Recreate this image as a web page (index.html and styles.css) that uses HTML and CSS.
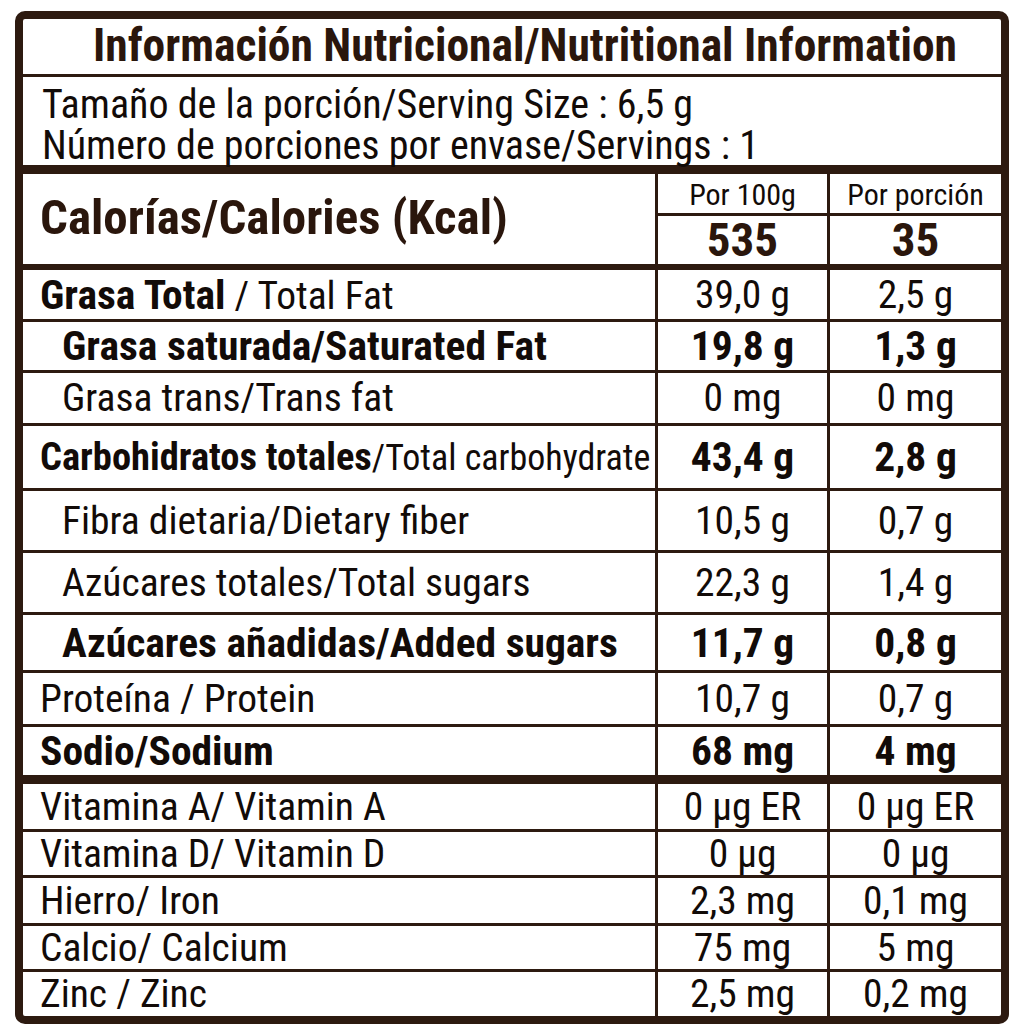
FILE: index.html
```html
<!DOCTYPE html>
<html lang="es">
<head>
<meta charset="utf-8">
<title>Información Nutricional</title>
<link rel="stylesheet" href="styles.css">
</head>
<body>
<div class="panel">
  <div class="title">Información Nutricional/Nutritional Information</div>
  <div class="serving">
    <div>Tamaño de la porción/Serving Size : 6,5 g</div>
    <div>Número de porciones por envase/Servings : 1</div>
  </div>
  <div class="calories">
    <div class="cal-label">Calorías/Calories (Kcal)</div>
    <div class="cal-col">
      <div class="cal-head">Por 100g</div>
      <div class="cal-val">535</div>
    </div>
    <div class="cal-col">
      <div class="cal-head">Por porción</div>
      <div class="cal-val">35</div>
    </div>
  </div>

  <div class="row r-fat"><div class="lbl"><span><b>Grasa Total</b> / Total Fat</span></div><div class="val">39,0 g</div><div class="val">2,5 g</div></div>
  <div class="row r-sat bold"><div class="lbl indent">Grasa saturada/Saturated Fat</div><div class="val">19,8 g</div><div class="val">1,3 g</div></div>
  <div class="row r-trans"><div class="lbl indent">Grasa trans/Trans fat</div><div class="val">0 mg</div><div class="val">0 mg</div></div>
  <div class="row r-carb"><div class="lbl"><span><b>Carbohidratos totales</b>/Total carbohydrate</span></div><div class="val bold">43,4 g</div><div class="val bold">2,8 g</div></div>
  <div class="row r-fib"><div class="lbl indent">Fibra dietaria/Dietary fiber</div><div class="val">10,5 g</div><div class="val">0,7 g</div></div>
  <div class="row r-sug"><div class="lbl indent">Azúcares totales/Total sugars</div><div class="val">22,3 g</div><div class="val">1,4 g</div></div>
  <div class="row r-add bold"><div class="lbl indent">Azúcares añadidas/Added sugars</div><div class="val">11,7 g</div><div class="val">0,8 g</div></div>
  <div class="row r-prot"><div class="lbl">Proteína / Protein</div><div class="val">10,7 g</div><div class="val">0,7 g</div></div>
  <div class="row r-sod bold thick"><div class="lbl">Sodio/Sodium</div><div class="val">68 mg</div><div class="val">4 mg</div></div>

  <div class="row mini"><div class="lbl">Vitamina A/ Vitamin A</div><div class="val">0 µg ER</div><div class="val">0 µg ER</div></div>
  <div class="row mini r-vd"><div class="lbl">Vitamina D/ Vitamin D</div><div class="val">0 µg</div><div class="val">0 µg</div></div>
  <div class="row mini"><div class="lbl">Hierro/ Iron</div><div class="val">2,3 mg</div><div class="val">0,1 mg</div></div>
  <div class="row mini r-vd"><div class="lbl">Calcio/ Calcium</div><div class="val">75 mg</div><div class="val">5 mg</div></div>
  <div class="row mini last"><div class="lbl">Zinc / Zinc</div><div class="val">2,5 mg</div><div class="val">0,2 mg</div></div>
</div>
</body>
</html>
```
FILE: styles.css
```css
html, body {
  margin: 0;
  padding: 0;
  background: #ffffff;
}

body {
  padding: 11px 0 0 15px;
  font-family: "Liberation Sans Narrow", "Roboto Condensed", "DejaVu Sans Condensed", "Liberation Sans", sans-serif;
  font-stretch: condensed;
  color: #120b08;
}

.panel {
  width: 994px;
  box-sizing: border-box;
  border: 8px solid #2d1a10;
  border-radius: 10px;
  background: #fff;
}

.title {
  height: 58px;
  box-sizing: border-box;
  border-bottom: 3px solid #2d1a10;
  display: flex;
  align-items: center;
  justify-content: center;
  padding: 0 0 2px 26px;
  font-size: 45.5px;
  font-weight: bold;
  color: #2a160c;
  line-height: 1;
}

.serving {
  border-bottom: 9px solid #2d1a10;
  box-sizing: border-box;
  height: 97px;
  padding: 7px 0 0 19px;
  font-size: 40px;
  line-height: 41px;
}

.calories {
  display: grid;
  grid-template-columns: 1fr 172px 174px;
  border-bottom: 6px solid #2d1a10;
}

.cal-label {
  font-size: 49px;
  font-weight: bold;
  color: #2a160c;
  padding: 0 0 4px 17px;
  display: flex;
  align-items: center;
  height: 90px;
  box-sizing: border-box;
  line-height: 1;
}

.cal-col {
  border-left: 3px solid #2d1a10;
  display: flex;
  flex-direction: column;
}

.cal-head {
  height: 42px;
  border-bottom: 3px solid #2d1a10;
  display: flex;
  align-items: center;
  justify-content: center;
  font-size: 30px;
  line-height: 1;
  padding-top: 2px;
  box-sizing: border-box;
}

.cal-val {
  height: 48px;
  display: flex;
  align-items: center;
  justify-content: center;
  font-size: 47px;
  font-weight: bold;
  color: #2a160c;
  line-height: 1;
  padding-bottom: 2px;
  box-sizing: border-box;
}

.row {
  display: grid;
  grid-template-columns: 1fr 172px 174px;
  border-bottom: 3px solid #2d1a10;
  box-sizing: border-box;
  font-size: 39.5px;
  line-height: 1;
}

.row.bold {
  font-weight: bold;
  font-size: 41.5px;
}

.row.thick {
  border-bottom-width: 9px;
}

.lbl {
  display: flex;
  align-items: center;
  padding-left: 17px;
  white-space: nowrap;
}

.lbl b {
  font-size: 41.5px;
}

.lbl.indent {
  padding-left: 39px;
}

.r-carb .lbl span {
  font-size: 36px;
}

.r-carb .lbl b {
  font-size: 38.5px;
}

.val {
  border-left: 3px solid #2d1a10;
  display: flex;
  align-items: center;
  justify-content: center;
  white-space: nowrap;
}

.val.bold {
  font-weight: bold;
  font-size: 41.5px;
}

.r-fat { height: 52px; }
.r-sat { height: 51px; }
.r-trans { height: 53px; }
.r-carb { height: 65px; }
.r-fib { height: 62px; }
.r-sug { height: 62px; }
.r-add { height: 58px; }
.r-prot { height: 54px; }
.r-sod { height: 57px; }

.row.mini {
  height: 48px;
  font-size: 39.5px;
}

.row.mini.r-vd {
  height: 46px;
}

.row.mini.last {
  border-bottom: none;
  height: 44px;
}
```
